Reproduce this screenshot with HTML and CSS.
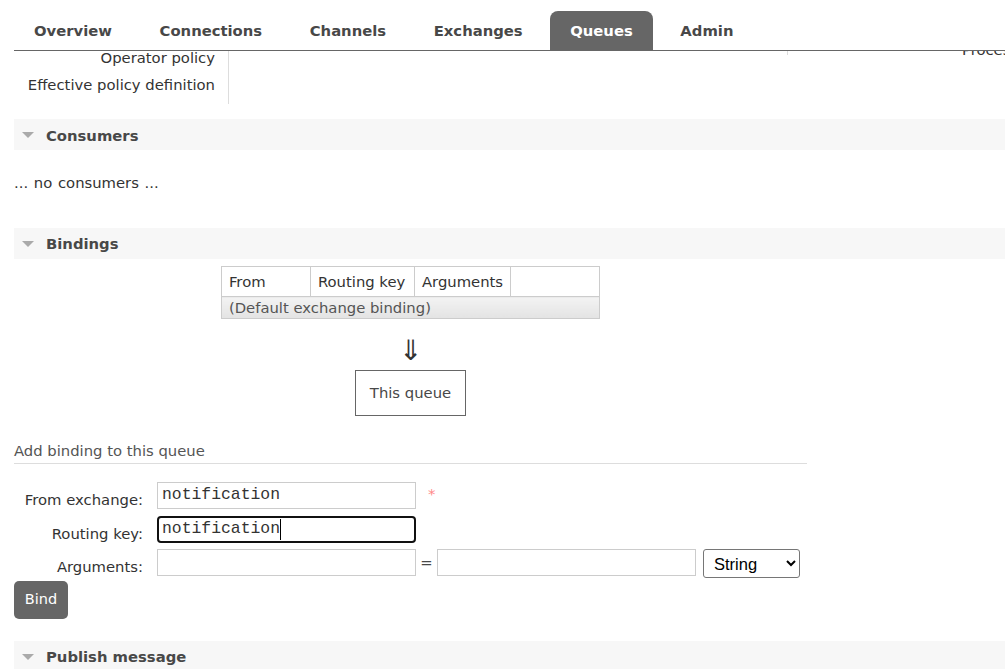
FILE: index.html
```html
<!DOCTYPE html>
<html>
<head>
<meta charset="utf-8">
<link rel="stylesheet" href="styles.css">
</head>
<body>
<div class="header">
  <ul class="tabs">
    <li class="tab">Overview</li>
    <li class="tab">Connections</li>
    <li class="tab">Channels</li>
    <li class="tab">Exchanges</li>
    <li class="tab active">Queues</li>
    <li class="tab">Admin</li>
  </ul>
</div>

<div class="clip">
  <div class="policy">
    <div class="kv">
      <div class="kv-labels">
        <div class="kv-label">Operator policy</div>
        <div class="kv-label">Effective policy definition</div>
      </div>
      <div class="kv-values"></div>
    </div>
    <div class="side">Process memory</div>
  </div>
</div>

<div class="section-bar first"><span class="tri"></span>Consumers</div>
<p class="empty">... no consumers ...</p>

<div class="section-bar bindings-bar"><span class="tri"></span>Bindings</div>
<div class="bindings-area">
  <table class="bind-table">
    <tr class="head">
      <th class="c1">From</th>
      <th class="c2">Routing key</th>
      <th class="c3">Arguments</th>
      <th class="c4"></th>
    </tr>
    <tr class="def">
      <td colspan="4">(Default exchange binding)</td>
    </tr>
  </table>
  <div class="arrow">&#8659;</div>
  <div class="this-queue">This queue</div>
</div>

<h3 class="add-title">Add binding to this queue</h3>
<div class="form">
  <div class="row r1">
    <label class="lbl">From exchange:</label>
    <input class="field" type="text" value="notification">
    <span class="req">*</span>
  </div>
  <div class="row r2">
    <label class="lbl">Routing key:</label>
    <span class="caret-wrap">
      <input class="field focused" type="text" value="notification">
      <span class="caret"></span>
    </span>
  </div>
  <div class="row r3">
    <label class="lbl">Arguments:</label>
    <input class="field" type="text" value="">
    <span class="eq">=</span>
    <input class="field" type="text" value="">
    <select class="type-select">
      <option>String</option>
      <option>Number</option>
      <option>Boolean</option>
    </select>
  </div>
</div>
<button class="bind-btn">Bind</button>

<div class="section-bar publish-bar"><span class="tri"></span>Publish message</div>
</body>
</html>
```

FILE: styles.css
```css
html, body {
  margin: 0;
  padding: 0;
  overflow: hidden;
}
body {
  font-family: "DejaVu Sans", Verdana, sans-serif;
  font-size: 14.8px;
  color: #484848;
  background: #fff;
  width: 1005px;
  height: 669px;
}

.header {
  height: 51px;
  padding: 11px 0 0 14px;
  box-sizing: border-box;
  display: flex;
}
.tabs {
  list-style: none;
  margin: 0;
  padding: 0;
  display: flex;
  gap: 7.6px;
  flex: 1;
  border-bottom: 1px solid #666;
}
.tab {
  padding: 1px 20px 0;
  height: 39px;
  box-sizing: border-box;
  line-height: 38px;
  font-weight: bold;
  color: #484848;
  white-space: nowrap;
}
.tab.active {
  background: #666;
  color: #fff;
  border-radius: 8px 8px 0 0;
}

.clip {
  height: 53px;
  overflow: hidden;
}
.policy {
  display: flex;
  align-items: flex-start;
  margin-top: -40px;
  padding-left: 14px;
}
.kv {
  display: flex;
  width: 773px;
  margin-top: 6px;
  flex-shrink: 0;
}
.kv-labels {
  width: 214px;
  box-sizing: border-box;
  padding: 27px 13px 6px 0;
  text-align: right;
  color: #333;
}
.kv-label {
  height: 27px;
  box-sizing: border-box;
  padding-top: 7.5px;
  line-height: 12px;
  white-space: nowrap;
}
.kv-values {
  flex: 1;
  border-left: 1px solid #ddd;
}
.side {
  height: 44px;
  box-sizing: border-box;
  border-left: 1px solid #ddd;
  padding: 30px 0 0 174px;
  line-height: 17px;
  white-space: nowrap;
  color: #333;
  flex-shrink: 0;
}

.section-bar {
  margin-left: 14px;
  height: 31px;
  box-sizing: border-box;
  background: #f7f7f7;
  display: flex;
  align-items: center;
  font-weight: bold;
  color: #484848;
}
.section-bar.first { margin-top: 15px; padding-top: 1px; }
.bindings-bar { margin-top: 37px; }
.publish-bar { margin-top: 22px; }
.tri {
  width: 0;
  height: 0;
  border-left: 6.5px solid transparent;
  border-right: 6.5px solid transparent;
  border-top: 6px solid #aaa;
  margin: 0 12px 0 8px;
}

.empty {
  margin: 24px 0 0 14px;
  line-height: 17px;
  color: #333;
  word-spacing: 1px;
}

.bindings-area {
  width: 793px;
  margin-left: 14px;
  display: flex;
  flex-direction: column;
  align-items: center;
}
.bind-table {
  margin-top: 7px;
  border-collapse: collapse;
  color: #333;
}
.bind-table th, .bind-table td {
  border: 1px solid #ccc;
  padding: 0 7px;
  text-align: left;
  font-weight: normal;
  white-space: nowrap;
}
.bind-table .head { height: 30px; }
.bind-table .head th { padding-bottom: 1px; }
.bind-table .c1 { width: 74px; }
.bind-table .c2 { width: 89px; }
.bind-table .c3 { width: 81px; }
.bind-table .c4 { width: 74px; }
.bind-table .def { height: 22px; }
.bind-table .def td {
  background: linear-gradient(#f3f3f3, #e3e3e3);
  color: #555;
  line-height: 20px;
}
.arrow {
  margin-top: 17px;
  height: 34px;
  line-height: 30px;
  font-size: 28px;
  font-weight: 200;
  color: #333;
}
.this-queue {
  height: 46px;
  box-sizing: border-box;
  border: 1px solid #666;
  padding: 0 14px;
  line-height: 44px;
  color: #484848;
}

.add-title {
  margin: 26px 0 0 14px;
  width: 793px;
  font-size: 14.8px;
  font-weight: normal;
  line-height: 17px;
  padding-bottom: 4px;
  border-bottom: 1px solid #ddd;
  color: #555;
}

.form {
  margin: 18px 0 0 14px;
  display: flex;
  flex-direction: column;
}
.row {
  display: flex;
  align-items: flex-start;
}
.r1 { margin-bottom: 7px; }
.r2 { margin-bottom: 6px; }
.lbl {
  width: 129px;
  margin-right: 14px;
  text-align: right;
  padding-top: 9px;
  line-height: 17px;
  color: #333;
  white-space: nowrap;
}
.field {
  width: 259px;
  height: 27px;
  box-sizing: border-box;
  margin: 0;
  border: 1px solid #ccc;
  border-radius: 0;
  padding: 0 4px 3px;
  font-family: "Liberation Mono", "Courier New", monospace;
  font-size: 16.4px;
  color: #333;
  background: #fff;
  outline: none;
}
.field.focused {
  border: 2px solid #111;
  border-radius: 4px;
  padding: 0 3px 3px;
}
.caret-wrap {
  position: relative;
  display: block;
  height: 27px;
}
.caret {
  position: absolute;
  left: 123px;
  top: 3px;
  width: 1px;
  height: 21px;
  background: #000;
}
.req {
  margin-left: 12px;
  padding-top: 3px;
  line-height: 17px;
  color: #f88;
}
.eq {
  width: 21px;
  text-align: center;
  line-height: 27px;
  color: #484848;
}
.type-select {
  margin: 0 0 0 7px;
  width: 97px;
  height: 29px;
  box-sizing: border-box;
  font-family: "Liberation Sans", Arial, sans-serif;
  font-size: 16.5px;
  color: #000;
  background: #fff;
  border: 1px solid #767676;
  border-radius: 3px;
  padding-left: 6px;
}

.bind-btn {
  display: block;
  margin: 3px 0 0 14px;
  width: 54px;
  height: 38px;
  padding: 0 0 2px 0;
  border: none;
  border-radius: 5px;
  background: #666;
  color: #fff;
  font-family: "DejaVu Sans", Verdana, sans-serif;
  font-size: 14.5px;
}
```
